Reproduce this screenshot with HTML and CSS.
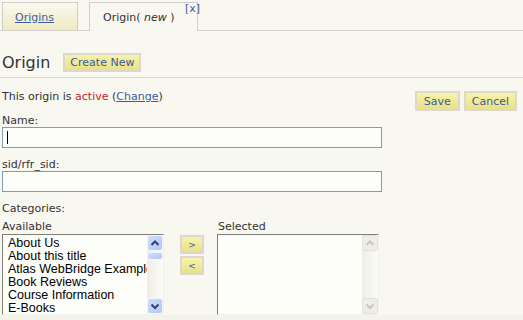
FILE: index.html
```html
<!DOCTYPE html>
<html lang="en">
<head>
    <meta charset="UTF-8">
    <meta name="viewport" content="width=device-width, initial-scale=1.0">
    <title>Origin</title>
    <link rel="stylesheet" href="styles.css">
</head>
<body>
  <div class="tabs">
    <div class="tab"><a href="#">Origins</a></div>
    <div class="tab current">Origin( <em>new</em> )<a class="close" href="#">[x]</a></div>
  </div>
  <main>
    <div class="title-row">
      <h1>Origin</h1>
      <button class="btn">Create New</button>
    </div>
    <div class="status-row">
      <p>This origin is <span class="active">active</span> (<a href="#">Change</a>)</p>
      <div class="actions">
        <button class="btn">Save</button>
        <button class="btn">Cancel</button>
      </div>
    </div>
    <label class="field-label">Name:</label>
    <div class="text-input"><span class="caret"></span></div>
    <label class="field-label second">sid/rfr_sid:</label>
    <div class="text-input"></div>
    <p class="cat-label">Categories:</p>
    <div class="lists">
      <div class="col">
        <p class="list-label">Available</p>
        <div class="listbox">
          <ul class="items">
            <li>About Us</li>
            <li>About this title</li>
            <li>Atlas WebBridge Example</li>
            <li>Book Reviews</li>
            <li>Course Information</li>
            <li>E-Books</li>
          </ul>
          <div class="scrollbar">
            <div class="sb-btn"><svg viewBox="0 0 14 14"><path d="M3.5 9 L7 5.5 L10.5 9"/></svg></div>
            <div class="sb-thumb"></div>
            <div class="sb-track"></div>
            <div class="sb-btn"><svg viewBox="0 0 14 14"><path d="M3.5 5.5 L7 9 L10.5 5.5"/></svg></div>
          </div>
        </div>
      </div>
      <div class="move">
        <button class="btn small">&gt;</button>
        <button class="btn small">&lt;</button>
      </div>
      <div class="col">
        <p class="list-label">Selected</p>
        <div class="listbox">
          <ul class="items"></ul>
          <div class="scrollbar disabled">
            <div class="sb-btn"><svg viewBox="0 0 14 14"><path d="M3.5 9 L7 5.5 L10.5 9"/></svg></div>
            <div class="sb-track"></div>
            <div class="sb-btn"><svg viewBox="0 0 14 14"><path d="M3.5 5.5 L7 9 L10.5 5.5"/></svg></div>
          </div>
        </div>
      </div>
    </div>
  </main>
  <div class="bottom-strip"></div>
</body>
</html>
```

FILE: styles.css
```css
*{
    margin: 0;
    padding: 0;
    box-sizing: border-box;
}
body{
    background-color: #f8f7f0;
    color: #333;
    font-family: "DejaVu Sans", Verdana, sans-serif;
    font-size: 11px;
    overflow: hidden;
}
a{
    color: #3d5c9c;
}
.tabs{
    display: flex;
    align-items: flex-start;
    height: 31px;
    padding: 2px 0 0 2px;
    border-bottom: 1px solid #d3d1c9;
}
.tab{
    position: relative;
    width: 76px;
    height: 28px;
    padding: 8px 0 0 12px;
    line-height: 13px;
    border: 1px solid #d0cec6;
    border-bottom: none;
    background: linear-gradient(#f9f8f0, #f0eac2);
}
.tab.current{
    width: 109px;
    height: 29px;
    margin-left: 11px;
    padding-left: 13px;
    background: #f8f7f0;
    color: #333;
}
.tab em{
    font-style: italic;
}
.close{
    position: absolute;
    top: 0;
    right: -3px;
    font-size: 11px;
    line-height: 11px;
    text-decoration: none;
}
main{
    padding: 0 0 0 2px;
}
.title-row{
    display: flex;
    align-items: center;
    gap: 13px;
    height: 19px;
    margin-top: 22px;
}
h1{
    font-size: 16px;
    font-weight: normal;
    line-height: 19px;
    color: #333;
}
.btn{
    height: 19px;
    padding: 0 7px;
    font-family: "DejaVu Sans", Verdana, sans-serif;
    font-size: 11px;
    color: #3a5a98;
    border: 2px solid #dad8cf;
    background: linear-gradient(#f8f3a8, #e9e08a);
}
.title-row .btn{
    padding: 0 5px;
}
.status-row{
    display: flex;
    justify-content: space-between;
    align-items: flex-start;
    margin: 5px 0 0 -2px;
    padding: 13px 6px 0 2px;
    border-top: 1px solid #d8d6cf;
    width: 523px;
}
.status-row p{
    line-height: 13px;
    margin-top: -1px;
}
.active{
    color: #d0202a;
}
.actions{
    display: flex;
    gap: 4px;
}
.actions .btn{
    height: 20px;
    padding: 0 7px;
}
.actions .btn:last-child{
    padding: 0 6px;
}
.field-label{
    display: block;
    height: 12px;
    line-height: 12px;
    margin-top: 4px;
}
.field-label.second{
    margin-top: 11px;
}
.text-input{
    width: 380px;
    height: 21px;
    border: 1px solid #7f9db9;
    background: #fdfdf9;
    padding: 3px 0 0 4px;
}
.caret{
    display: block;
    width: 1px;
    height: 13px;
    background: #000;
}
.cat-label{
    margin-top: 11px;
    line-height: 12px;
}
.lists{
    display: flex;
    margin-top: 6px;
}
.list-label{
    line-height: 12px;
    height: 13px;
}
.col:last-child .list-label{
    padding-left: 1px;
}
.listbox{
    display: flex;
    width: 162px;
    height: 81px;
    border: 1px solid #f0efe8;
    border-top-color: #7f7f77;
    border-left-color: #7f7f77;
    background: #fdfdf9;
}
.items{
    list-style: none;
    flex: 1;
    overflow: hidden;
    padding: 2px 0 0 5px;
    font-family: "Liberation Sans", Arial, sans-serif;
    font-size: 12.5px;
    line-height: 13px;
    color: #000;
    white-space: nowrap;
}
.scrollbar{
    display: flex;
    flex-direction: column;
    width: 16px;
    background: linear-gradient(90deg, #eeede5, #fbfbf7);
}
.sb-btn, .sb-thumb{
    border: 1px solid #f4f6ff;
    border-radius: 3px;
    background: linear-gradient(135deg, #cfdcfb, #b3c8f5);
}
.sb-btn{
    height: 16px;
}
.sb-btn svg{
    display: block;
    width: 14px;
    height: 14px;
}
.sb-btn path{
    fill: none;
    stroke: #2f4370;
    stroke-width: 2;
}
.sb-thumb{
    height: 8px;
    margin-top: 1px;
}
.sb-track{
    flex: 1;
}
.scrollbar.disabled .sb-btn{
    border-color: #e3e2da;
    background: #eeede6;
}
.scrollbar.disabled path{
    stroke: #c8c8c0;
}
.move{
    display: flex;
    flex-direction: column;
    gap: 2px;
    margin: 14px 13px 0 16px;
}
.btn.small{
    width: 24px;
    height: 19px;
    padding: 0;
    font-size: 9px;
}
.bottom-strip{
    height: 10px;
    background: #f3f2eb;
}
```
